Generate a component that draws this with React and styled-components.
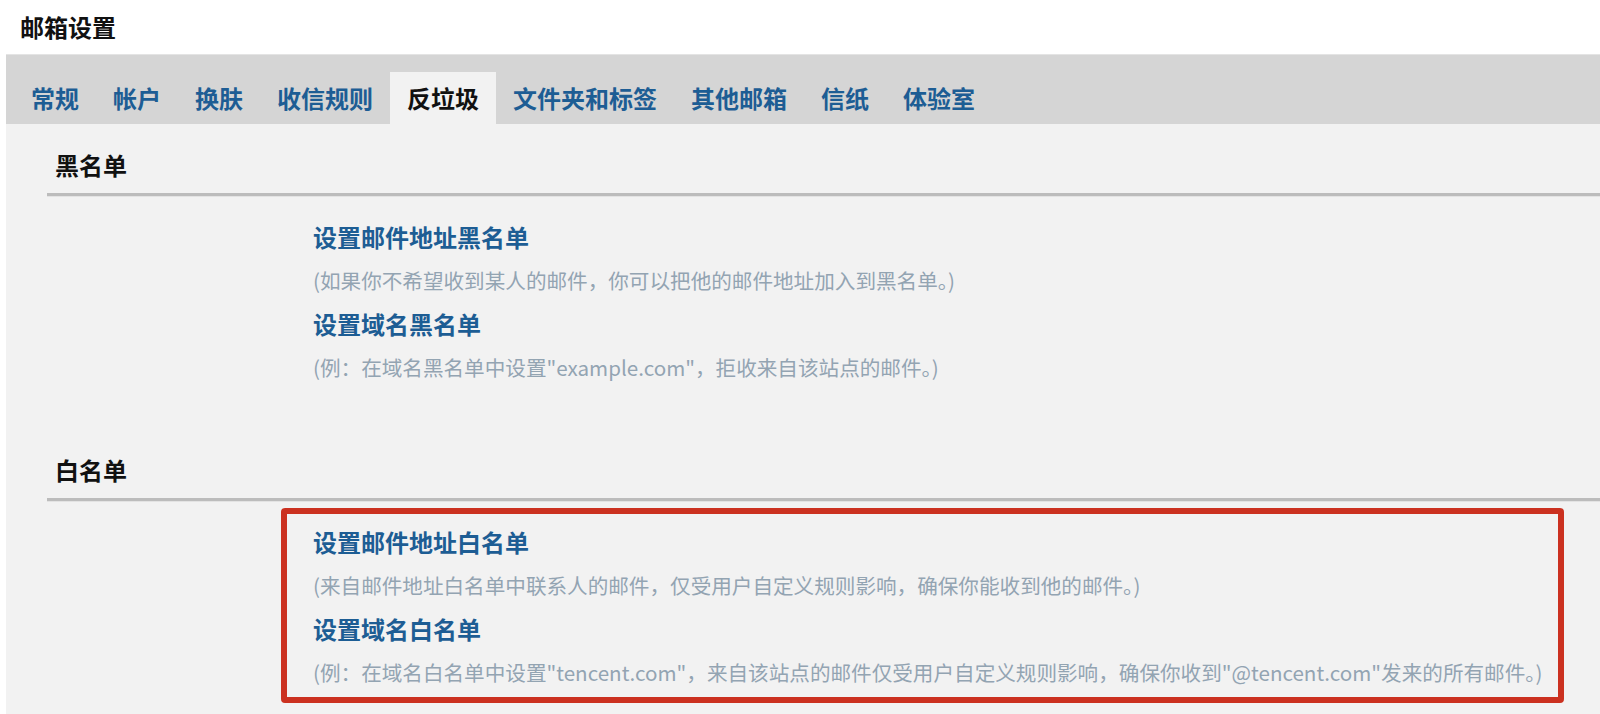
import React from 'react';
import styled, { createGlobalStyle } from 'styled-components';

const GlobalStyle = createGlobalStyle`
  html, body {
    margin: 0;
    padding: 0;
    background: #ffffff;
  }
  body {
    font-family: "Noto Sans CJK SC", "Noto Sans", sans-serif;
  }
`;

const Page = styled.div`
  min-height: 100vh;
  display: flex;
  flex-direction: column;
`;

const Header = styled.h1`
  margin: 0;
  padding-left: 20px;
  height: 54px;
  line-height: 54px;
  font-size: 24px;
  font-weight: 700;
  color: #111111;
`;

const Body = styled.div`
  flex: 1;
  margin-left: 6px;
  display: flex;
  flex-direction: column;
  background: #f2f2f2;
`;

const TabBar = styled.ul`
  list-style: none;
  margin: 0;
  height: 70px;
  box-sizing: border-box;
  padding: 17px 0 0 8px;
  display: flex;
  align-items: flex-end;
  background: #d5d5d5;
  border-top: 1px solid #e4e4e4;
`;

const Tab = styled.li`
  height: 52px;
  line-height: 52px;
  padding: 0 17px;
  font-size: 24px;
  font-weight: 700;
  color: ${props => props.active ? '#111111' : '#1d5d94'};
  background: ${props => props.active ? '#f2f2f2' : 'transparent'};
  cursor: pointer;
  white-space: nowrap;
`;

const Content = styled.div`
  padding: 19px 0 12px 41px;
  display: flex;
  flex-direction: column;
  gap: 50px;
`;

const Section = styled.section`
  display: flex;
  flex-direction: column;
`;

const SectionTitle = styled.h2`
  margin: 0;
  padding: 0 8px 6px;
  line-height: 44px;
  font-size: 24px;
  font-weight: 700;
  color: #111111;
  border-bottom: 3px solid #bcbcbc;
  box-shadow: 0 1px 0 #e3e3e3;
`;

const ItemList = styled.div`
  margin: 7px 36px 0 234px;
  padding: 6px 26px 3px;
  border: 6px solid ${props => props.highlight ? '#cb3120' : 'transparent'};
  border-radius: 4px;
`;

const Link = styled.a`
  display: block;
  line-height: 44px;
  font-size: 24px;
  font-weight: 700;
  color: #1d5d94;
  text-decoration: none;
  cursor: pointer;
`;

const Hint = styled.p`
  margin: 0;
  line-height: 43px;
  font-size: 20.6px;
  color: #93a4b2;
  white-space: nowrap;
`;

const tabs = ['常规', '帐户', '换肤', '收信规则', '反垃圾', '文件夹和标签', '其他邮箱', '信纸', '体验室'];

const sections = [
  {
    title: '黑名单',
    items: [
      { link: '设置邮件地址黑名单', hint: '(如果你不希望收到某人的邮件，你可以把他的邮件地址加入到黑名单。)' },
      { link: '设置域名黑名单', hint: '(例：在域名黑名单中设置"example.com"，拒收来自该站点的邮件。)' },
    ],
  },
  {
    title: '白名单',
    highlight: true,
    items: [
      { link: '设置邮件地址白名单', hint: '(来自邮件地址白名单中联系人的邮件，仅受用户自定义规则影响，确保你能收到他的邮件。)' },
      { link: '设置域名白名单', hint: '(例：在域名白名单中设置"tencent.com"，来自该站点的邮件仅受用户自定义规则影响，确保你收到"@tencent.com"发来的所有邮件。)' },
    ],
  },
];

export default function App() {
  return (
    <Page>
      <GlobalStyle />
      <Header>邮箱设置</Header>
      <Body>
        <TabBar>
          {tabs.map(t => (
            <Tab key={t} active={t === '反垃圾'}>{t}</Tab>
          ))}
        </TabBar>
        <Content>
          {sections.map(s => (
            <Section key={s.title}>
              <SectionTitle>{s.title}</SectionTitle>
              <ItemList highlight={s.highlight}>
                {s.items.map(item => (
                  <React.Fragment key={item.link}>
                    <Link>{item.link}</Link>
                    <Hint>{item.hint}</Hint>
                  </React.Fragment>
                ))}
              </ItemList>
            </Section>
          ))}
        </Content>
      </Body>
    </Page>
  );
}
